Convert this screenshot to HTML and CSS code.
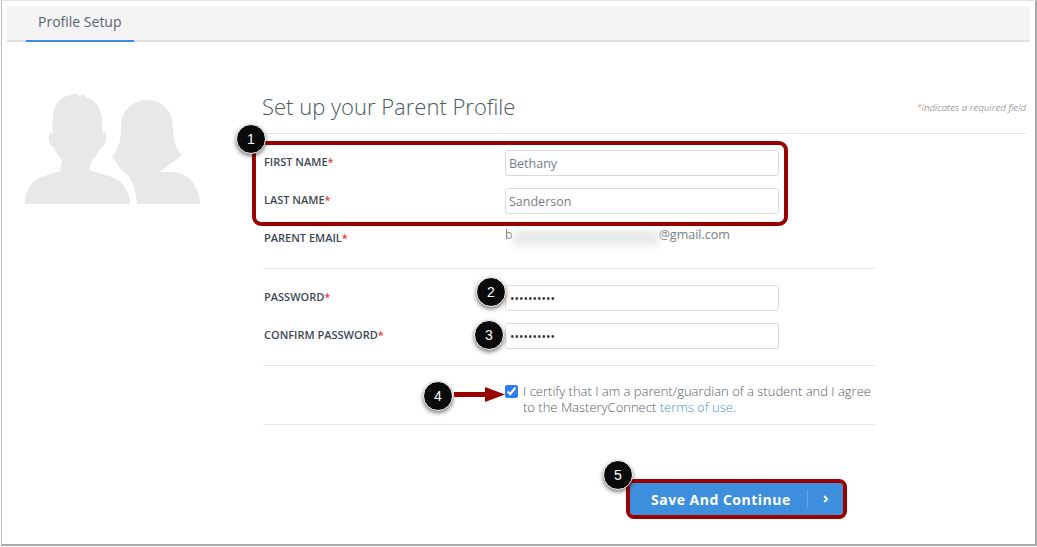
FILE: index.html
```html
<!DOCTYPE html>
<html lang="en">
<head>
    <meta charset="UTF-8">
    <title>Profile Setup</title>
    <link rel="stylesheet" href="styles.css">
</head>
<body>
    <div class="window">
        <div class="tabbar">
            <div class="tab">Profile Setup</div>
        </div>

        <div class="content">
            <svg class="avatar" viewBox="25 93 175 111">
                <path class="sil" d="M124 172 C119 168 116 161 112 157 C118 151 121 141 121 128 C121 111 132 100 147 100 C162 100 173 111 173 128 C173 140 176 150 182 155 C175 161 166 168 158 172 L172 172 C190 173 200 188 200 204 L137 204 C136 190 132 178 124 172 Z"/>
                <path class="sil" d="M25 204 C25 188 33 178 48 175 L60 171 L62 160 C58 155 55 151 54 147 C50 147 48 139 49 134 C50 132 52 132 53 133 C51 112 55 98 70 95 L76 93 L79 96 L84 94 L85 97 L92 100 C100 105 104 118 102 133 C104 132 106 132 106 134 C107 140 104 147 101 147 C99 152 96 157 92 160 L89 170 L105 175 C122 179 130 190 130 204 Z"/>
            </svg>

            <form class="profile">
                <div class="heading">
                    <h1>Set up your Parent Profile</h1>
                    <span class="note"><i>*</i>indicates a required field</span>
                </div>

                <div class="fields">
                    <div class="row">
                        <label>FIRST NAME<b>*</b></label>
                        <input type="text" value="Bethany">
                    </div>
                    <div class="row">
                        <label>LAST NAME<b>*</b></label>
                        <input type="text" value="Sanderson">
                    </div>
                    <div class="row email-row">
                        <label>PARENT EMAIL<b>*</b></label>
                        <div class="email"><span class="blur">b</span><span class="smudge"></span>@gmail.com</div>
                    </div>
                </div>

                <div class="fields passwords">
                    <div class="row">
                        <label>PASSWORD<b>*</b></label>
                        <input type="password" value="1234567890">
                    </div>
                    <div class="row">
                        <label>CONFIRM PASSWORD<b>*</b></label>
                        <input type="password" value="1234567890">
                    </div>
                </div>

                <div class="certify">
                    <input type="checkbox" checked>
                    <p>I certify that I am a parent/guardian of a student and I agree to the MasteryConnect <a href="#">terms of use</a>.</p>
                </div>

                <div class="actions">
                    <button type="button" class="save">
                        <span class="save-label">Save And Continue</span>
                        <span class="save-arrow">
                            <svg width="6" height="8" viewBox="0 0 6 8"><path d="M1.2 1 L4.2 4 L1.2 7" fill="none" stroke="#fff" stroke-width="1.8"/></svg>
                        </span>
                    </button>
                </div>
            </form>
        </div>

        <!-- callouts on top of the page -->
        <div class="highlight"></div>
        <div class="badge badge-1">1</div>
        <div class="badge badge-2">2</div>
        <div class="badge badge-3">3</div>
        <div class="badge badge-4">4</div>
        <div class="badge badge-5">5</div>
        <svg class="arrow" width="51" height="15" viewBox="0 0 51 15">
            <path d="M0 5 H31 V0 L51 7.5 L31 15 V10 H0 Z" fill="#990000"/>
        </svg>
    </div>
</body>
</html>
```

FILE: styles.css
```css
body {
    margin: 0;
    background-color: #ffffff;
    font-family: "Open Sans", "Liberation Sans", sans-serif;
    color: #4a5560;
}

.window {
    position: relative;
    box-sizing: border-box;
    width: 1036px;
    height: 546px;
    margin-left: 1px;
    padding: 5px 5px 0 5px;
    border: 1px solid #cfcfcf;
    border-width: 1px 2px 2px 1px;
    border-color: #e2e2e2 #a9a9a9 #a9a9a9 #bdbdbd;
}

.tabbar {
    height: 34px;
    background-color: #f4f4f4;
    border-bottom: 2px solid #dde1e4;
    padding-left: 19px;
}

.tab {
    display: inline-block;
    height: 34px;
    padding: 0 12px;
    line-height: 32px;
    font-size: 14px;
    color: #59646d;
    border-bottom: 2px solid #3d8fde;
}

.content {
    display: flex;
    padding-left: 18px;
}

.avatar {
    flex: none;
    width: 175px;
    height: 111px;
    margin-top: 51px;
}

.sil {
    fill: #e8e8e8;
}

.profile {
    flex: 1;
    margin-left: 63px;
    margin-right: 4px;
}

.heading {
    display: flex;
    justify-content: space-between;
    align-items: center;
    box-sizing: border-box;
    height: 41px;
    margin-top: 51px;
    padding-bottom: 14px;
    border-bottom: 1px solid #e6e6e6;
}

h1 {
    margin: 0 0 0 -1px;
    font-size: 22px;
    font-weight: 300;
    color: #4d5861;
}

.note {
    padding-top: 3px;
    font-size: 9.8px;
    font-style: italic;
    font-weight: 300;
    color: #6f6f6f;
}

.note i {
    color: #e2584f;
}

.fields {
    width: 612px;
    padding-top: 16px;
    border-bottom: 1px solid #e6e6e6;
}

.row {
    display: grid;
    grid-template-columns: 242px 274px;
    height: 26px;
    margin-bottom: 12px;
}

.row label {
    padding: 2px 0 0 1px;
    line-height: 20px;
    font-size: 11px;
    font-weight: 600;
    color: #3d4852;
}

.row label b {
    color: #e0433a;
    font-size: 11px;
    font-weight: 600;
}

.row input {
    box-sizing: border-box;
    width: 274px;
    height: 26px;
    padding: 0 3px;
    border: 1px solid #dcdcdc;
    border-radius: 3px;
    outline: none;
    font-family: inherit;
    font-size: 12.5px;
    color: #767e84;
}

.row input[type="password"] {
    padding-left: 4px;
    color: #333333;
    font-size: 12px;
}

.email-row {
    height: 30px;
    margin-bottom: 12px;
}

.email {
    display: flex;
    align-items: center;
    height: 16px;
    font-size: 12.5px;
    color: #767e84;
}

.blur {
    filter: blur(0.6px);
}

.smudge {
    display: inline-block;
    width: 146px;
    height: 14px;
    margin-top: 8px;
    background-color: #e6e8e9;
    filter: blur(4px);
}

.passwords {
    padding-top: 16px;
    padding-bottom: 4px;
}

.certify {
    display: flex;
    align-items: flex-start;
    width: 612px;
    box-sizing: border-box;
    height: 59px;
    padding: 17px 0 0 242px;
    border-bottom: 1px solid #e6e6e6;
}

.certify input {
    flex: none;
    width: 13px;
    height: 13px;
    margin: 2px 5px 0 0;
    accent-color: #2f7bf0;
}

.certify p {
    margin: 0;
    font-size: 13px;
    line-height: 16px;
    font-weight: 300;
    color: #555e65;
}

.certify a {
    color: #4a95db;
    text-decoration: none;
}

.actions {
    width: 612px;
    box-sizing: border-box;
    padding: 58px 0 0 367px;
}

.save {
    display: flex;
    align-items: center;
    width: 213px;
    height: 32px;
    padding: 0;
    border: none;
    border-radius: 4px;
    outline: 4px solid #990000;
    background-color: #3d8fde;
    color: #ffffff;
    font-family: inherit;
}

.save-label {
    flex: none;
    width: 177px;
    box-sizing: border-box;
    padding-left: 21px;
    text-align: left;
    font-size: 14px;
    font-weight: 700;
    letter-spacing: 0.5px;
}

.save-arrow {
    display: flex;
    align-items: center;
    justify-content: center;
    flex: 1;
    height: 18px;
    border-left: 1px solid #64a6e5;
}

/* callouts */
.highlight {
    position: absolute;
    left: 250px;
    top: 140px;
    width: 528px;
    height: 77px;
    border: 4px solid #990000;
    border-radius: 9px;
}

.badge {
    position: absolute;
    box-sizing: border-box;
    width: 30px;
    height: 30px;
    border: 1px solid #ffffff;
    border-radius: 50%;
    background-color: #0a0a0a;
    color: #ffffff;
    font-family: "Liberation Sans", sans-serif;
    font-size: 14px;
    line-height: 28px;
    text-align: center;
    box-shadow: 0 2px 4px rgba(0, 0, 0, 0.55);
}

.badge-1 { left: 234px; top: 123px; }
.badge-2 { left: 474px; top: 276px; }
.badge-3 { left: 472px; top: 319px; }
.badge-4 { left: 421px; top: 380px; }
.badge-5 { left: 601px; top: 459px; }

.arrow {
    position: absolute;
    left: 452px;
    top: 386px;
}
```
